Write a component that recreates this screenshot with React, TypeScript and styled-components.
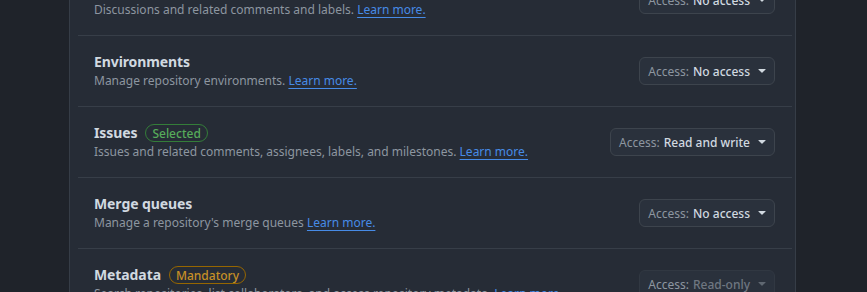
import React from 'react';
import styled, { createGlobalStyle } from 'styled-components';

const GlobalStyle = createGlobalStyle`
	html, body {
		margin: 0;
		padding: 0;
		background: #1f232a;
		overflow: hidden;
	}
	body {
		font-family: "Noto Sans", "Liberation Sans", sans-serif;
		-webkit-font-smoothing: antialiased;
	}
`

const StyledPage = styled.div`
	height: 292px;
	padding-left: 69px;
	overflow: hidden;
`

const StyledPanel = styled.div`
	min-height: 400px;
	margin-top: -35px;
	padding: 0 3px 0 8px;
	box-sizing: border-box;
	width: 727px;
	background: #262c36;
	border-left: 1px solid #363d47;
	border-right: 1px solid #363d47;
`

const StyledRow = styled.div`
	display: flex;
	align-items: center;
	justify-content: space-between;
	padding: 16px 17px 16px 16px;
	border-bottom: 1px solid #373e48;
`

const StyledInfo = styled.div`
	display: flex;
	flex-direction: column;
`

const StyledTitleLine = styled.div`
	display: flex;
	align-items: center;
	gap: 8px;
	height: 20px;
`

const StyledTitle = styled.span`
	font-size: 14px;
	font-weight: 700;
	line-height: 20px;
	color: #d1d9e0;
	letter-spacing: -0.1px;
`

const StyledLabel = styled.span<{ $tone: 'success' | 'attention' }>`
	display: inline-flex;
	align-items: center;
	height: 18px;
	padding: 0 6px;
	border-radius: 10px;
	font-size: 12px;
	font-weight: 500;
	box-sizing: border-box;
	color: ${p => p.$tone === 'success' ? '#57ab5a' : '#c69026'};
	border: 1px solid ${p => p.$tone === 'success' ? '#347d39' : '#966600'};
`

const StyledDescription = styled.div`
	font-size: 12px;
	line-height: 18px;
	color: #8d96a0;
`

const StyledLink = styled.a`
	color: #478be6;
	text-decoration: underline;
	text-underline-offset: 3px;
	text-decoration-thickness: 1px;
`

const StyledAccessButton = styled.button<{ $disabled?: boolean }>`
	display: flex;
	align-items: center;
	gap: 8px;
	height: 28px;
	padding: 0 8px;
	border-radius: 6px;
	background: #2a313c;
	border: 1px solid ${p => p.$disabled ? '#313842' : '#3d444d'};
	font-family: inherit;
	font-size: 12px;
	white-space: nowrap;
	flex-shrink: 0;
`

const StyledAccessLabel = styled.span`
	color: #8d96a0;
`

const StyledAccessValue = styled.span<{ $disabled?: boolean }>`
	color: ${p => p.$disabled ? '#6f7781' : '#d1d9e0'};
	font-weight: 500;
	margin-left: 4px;
`

const Caret = ({ muted }: { muted?: boolean }) => (
	<svg width="8" height="4" viewBox="4 7 8 4" fill={muted ? '#5f6771' : '#d1d9e0'}>
		<path d="m4.427 7.427 3.396 3.396a.25.25 0 0 0 .354 0l3.396-3.396A.25.25 0 0 0 11.396 7H4.604a.25.25 0 0 0-.177.427Z" />
	</svg>
)

type Permission = {
	title: string
	description: string
	access: string
	label?: { text: string, tone: 'success' | 'attention' }
	disabled?: boolean
}

const permissions: Permission[] = [
	{ title: 'Discussions', description: 'Discussions and related comments and labels.', access: 'No access' },
	{ title: 'Environments', description: 'Manage repository environments.', access: 'No access' },
	{ title: 'Issues', description: 'Issues and related comments, assignees, labels, and milestones.', access: 'Read and write', label: { text: 'Selected', tone: 'success' } },
	{ title: 'Merge queues', description: "Manage a repository's merge queues", access: 'No access' },
	{ title: 'Metadata', description: 'Search repositories, list collaborators, and access repository metadata.', access: 'Read-only', label: { text: 'Mandatory', tone: 'attention' }, disabled: true },
]

const App = () => {
	return <StyledPage>
		<GlobalStyle />
		<StyledPanel>
			{permissions.map(p => (
				<StyledRow key={p.title}>
					<StyledInfo>
						<StyledTitleLine>
							<StyledTitle>{p.title}</StyledTitle>
							{p.label && <StyledLabel $tone={p.label.tone}>{p.label.text}</StyledLabel>}
						</StyledTitleLine>
						<StyledDescription>
							{p.description} <StyledLink href="#">Learn more.</StyledLink>
						</StyledDescription>
					</StyledInfo>
					<StyledAccessButton $disabled={p.disabled}>
						<span>
							<StyledAccessLabel>Access:</StyledAccessLabel>
							<StyledAccessValue $disabled={p.disabled}>{p.access}</StyledAccessValue>
						</span>
						<Caret muted={p.disabled} />
					</StyledAccessButton>
				</StyledRow>
			))}
		</StyledPanel>
	</StyledPage>
}

export default App;
